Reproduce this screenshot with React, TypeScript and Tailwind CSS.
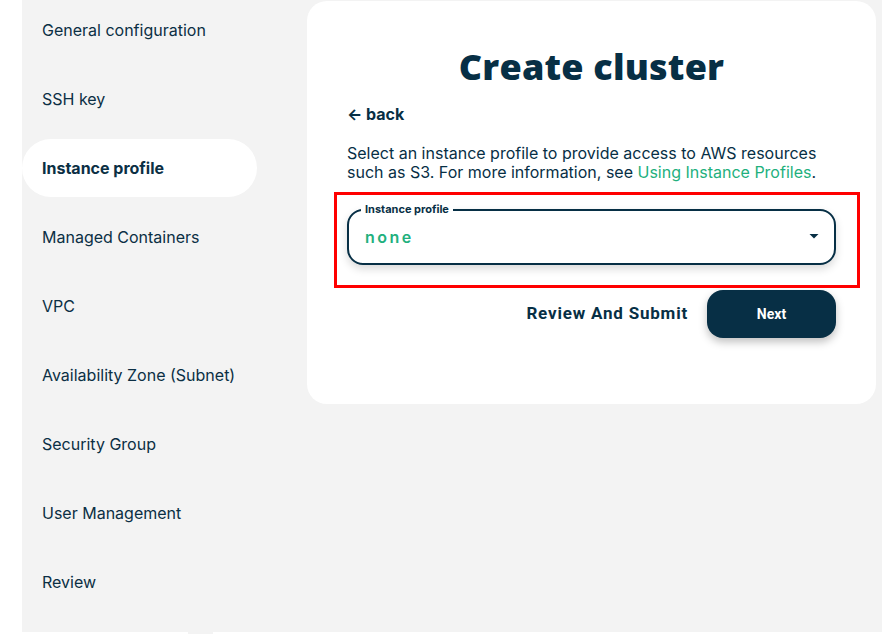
import React from "react";

const items = [
  "General configuration",
  "SSH key",
  "Instance profile",
  "Managed Containers",
  "VPC",
  "Availability Zone (Subnet)",
  "Security Group",
  "User Management",
  "Review",
];

export default function App() {
  return (
    <div className="w-[882px] h-[638px] bg-white overflow-hidden" style={{ fontFamily: "Inter, 'Noto Sans', sans-serif" }}>
      <div className="ml-[22px] h-[632px] bg-[#f3f3f3] flex">
        <div className="w-[285px] flex flex-col gap-[11px] pt-[1px]">
          {items.map((it) => (
            <div
              key={it}
              className={
                "h-[58px] w-[235px] rounded-full px-5 flex items-center text-[16px] text-[#0b2f44] " +
                (it === "Instance profile" ? "bg-white font-bold" : "")
              }
            >
              {it}
            </div>
          ))}
        </div>
        <div className="mt-[1px] w-[569px] h-[403px] bg-white rounded-[20px] px-[40px] flex flex-col">
          <h1
            className="text-center text-[36px] text-[#072f45] mt-[41px] leading-[50px] tracking-[0.2px]"
            style={{ fontFamily: "'Open Sans', sans-serif", fontWeight: 800 }}
          >
            Create cluster
          </h1>
          <div className="mt-[12px] text-[16px] font-bold text-[#072f45] leading-[20px]">← back</div>
          <p className="mt-[20px] text-[16px] leading-[19px] text-[#072f45]">
            Select an instance profile to provide access to AWS resources such as S3. For more information, see{" "}
            <span className="text-[#22b07d]">Using Instance Profiles</span>.
          </p>
          <div className="relative mt-[27px] h-[56px] rounded-[16px] border-2 border-[#072f45] shadow-[0_4px_8px_rgba(0,0,0,0.15)] flex items-center pl-[16px] pr-[12px]">
            <div className="absolute left-[-15px] top-[-19px] w-[526px] h-[96px] border-[3px] border-[#ff0000]" />
            <span className="absolute left-[12px] top-[-9px] bg-white px-[4px] text-[11px] font-bold text-[#072f45] leading-[14px]">
              Instance profile
            </span>
            <span className="flex-1 text-[16px] font-semibold text-[#22b07d] tracking-[2.5px]">none</span>
            <svg width="12" height="6" viewBox="0 0 12 6" className="mr-[2px]">
              <path d="M0 0 L12 0 L6 6 Z" fill="#072f45" transform="translate(1.5,0) scale(0.75)" />
            </svg>
          </div>
          <div className="mt-[25px] flex items-center justify-end gap-[19px]">
            <span className="text-[17px] font-bold text-[#072f45] tracking-[0.8px]" style={{ fontFamily: "Roboto, sans-serif" }}>
              Review And Submit
            </span>
            <button
              className="w-[129px] h-[48px] rounded-[16px] bg-[#072f45] text-white text-[14px] font-bold shadow-[0_4px_8px_rgba(0,0,0,0.25)]"
              style={{ fontFamily: "Roboto, sans-serif" }}
            >
              Next
            </button>
          </div>
        </div>
      </div>
      <div className="ml-[188px] w-[25px] h-[2px] bg-[#f3f3f3]" />
    </div>
  );
}
